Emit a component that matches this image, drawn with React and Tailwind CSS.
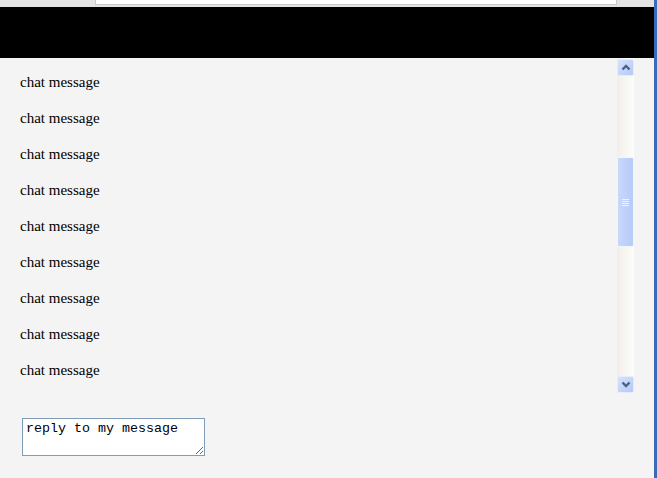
import React from 'react'

const messages = Array.from({ length: 9 }, () => 'chat message')

function ScrollButton({ dir }) {
  return (
    <div className="w-[17px] h-[17px] rounded-[2px] border border-[#e6ecfb] bg-gradient-to-br from-[#d6e2fd] to-[#b5c9f6] flex items-center justify-center">
      <svg width="10" height="7" viewBox="0 0 10 7" className={dir === 'down' ? 'rotate-180' : ''}>
        <path d="M1.5 5.5 L5 2 L8.5 5.5" fill="none" stroke="#4d6185" strokeWidth="2.4" />
      </svg>
    </div>
  )
}

export default function App() {
  return (
    <div className="w-[657px] h-[478px] flex overflow-hidden">
      <div className="flex-1 flex flex-col">
        {/* browser chrome strip */}
        <div className="h-[7px] bg-[#e3e3e3] flex">
          <div className="ml-[95px] w-[522px] h-[5px] bg-white border-b border-x border-[#c8c8c8]" />
        </div>

        {/* header */}
        <div className="h-[51px] bg-black" />

        <div className="flex-1 bg-[#f4f4f4] flex flex-col">
          {/* chat list */}
          <div className="flex h-[335px]">
            <div className="flex-1 pt-[6px] pl-[20px] font-['Liberation_Serif',serif] text-[15px] text-black">
              {messages.map((m, i) => (
                <div key={i} className="h-[36px] flex items-center">
                  {m}
                </div>
              ))}
            </div>

            {/* scrollbar */}
            <div className="w-[17px] mr-[20px] flex flex-col bg-gradient-to-r from-[#f1efe8] to-[#fdfdfb]">
              <div className="mt-[1px]">
                <ScrollButton dir="up" />
              </div>
              <div className="h-[81px]" />
              <div className="h-[90px] rounded-[2px] border border-[#f2f5fd] bg-gradient-to-r from-[#c9d8fc] to-[#b6cbf7] flex flex-col items-center justify-center gap-[1px]">
                <div className="w-[7px] h-[1px] bg-[#eef3fe]" />
                <div className="w-[7px] h-[1px] bg-[#eef3fe]" />
                <div className="w-[7px] h-[1px] bg-[#eef3fe]" />
                <div className="w-[7px] h-[1px] bg-[#eef3fe]" />
              </div>
              <div className="flex-1" />
              <ScrollButton dir="down" />
            </div>
          </div>

          {/* reply box */}
          <div className="pt-[25px] pl-[22px]">
            <textarea
              defaultValue="reply to my message"
              className="block w-[183px] h-[38px] border border-[#7f9db9] bg-white px-[3px] py-[2px] font-['Liberation_Mono',monospace] text-[13.33px] leading-[15px] text-black outline-none"
            />
          </div>
        </div>
      </div>
      <div className="w-[3px] bg-[#3b6bb8]" />
    </div>
  )
}
